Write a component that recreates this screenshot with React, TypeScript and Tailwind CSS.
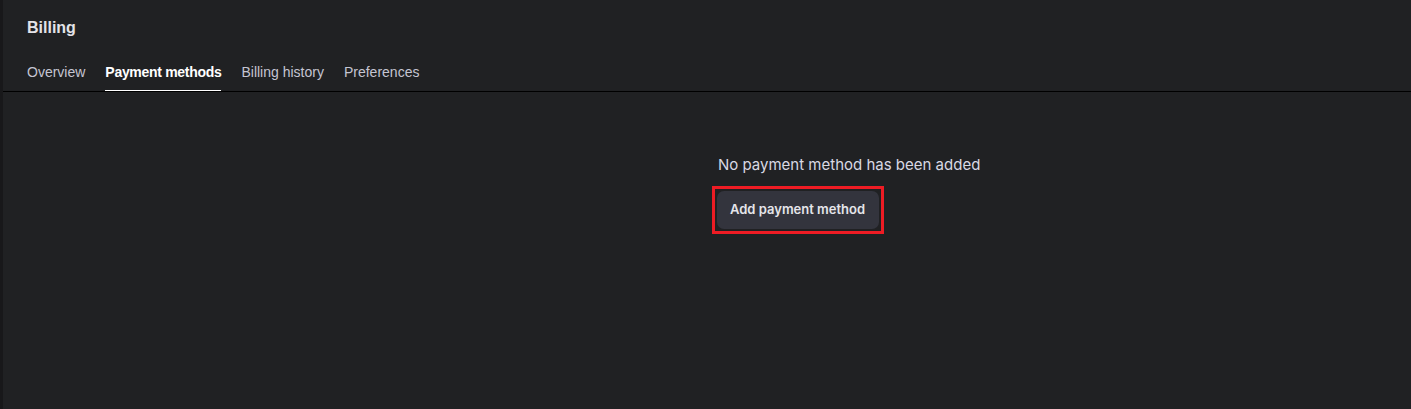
import React from "react";

export default function App() {
  const tabs = ["Overview", "Payment methods", "Billing history", "Preferences"];
  return (
    <div
      className="w-[1411px] h-[409px] bg-[#202123] text-[#ececf1] overflow-hidden flex"
      style={{ fontFamily: "Inter, 'Liberation Sans', sans-serif" }}
    >
      <div className="w-[3px] bg-[#18181a] shrink-0" />
      <div className="flex-1 flex flex-col">
        <div className="pl-[24px] pt-[17px]">
          <div
            className="text-[16px] font-bold leading-[22px] text-[#e3e3e8]"
            style={{ fontFamily: "'Liberation Sans', Arial, sans-serif" }}
          >
            Billing
          </div>
          <div
            className="flex gap-[20px] mt-[23px] text-[14px] leading-[20px]"
            style={{ fontFamily: "'Liberation Sans', Arial, sans-serif" }}
          >
            {tabs.map((t, i) => (
              <div
                key={t}
                className={
                  i === 1
                    ? "pb-[8px] border-b-2 border-white font-bold text-white tracking-[-0.3px]"
                    : "pb-[8px] border-b-2 border-transparent text-[#c5c5d2]"
                }
              >
                {t}
              </div>
            ))}
          </div>
        </div>
        <div className="h-px bg-black -mt-px" />
        <div className="flex-1 pl-[715px] pt-[62px]">
          <div className="text-[15px] leading-[22px] text-[#d9d9e3]">No payment method has been added</div>
          <div className="mt-[10px] -ml-[6px] inline-block border-[3px] border-[#ee1c24] p-[2px]">
            <button className="h-[38px] pl-[13px] pr-[14px] rounded-[7px] bg-[#33343d] text-[13px] font-semibold text-[#e5e5ea]">
              Add payment method
            </button>
          </div>
        </div>
      </div>
    </div>
  );
}
